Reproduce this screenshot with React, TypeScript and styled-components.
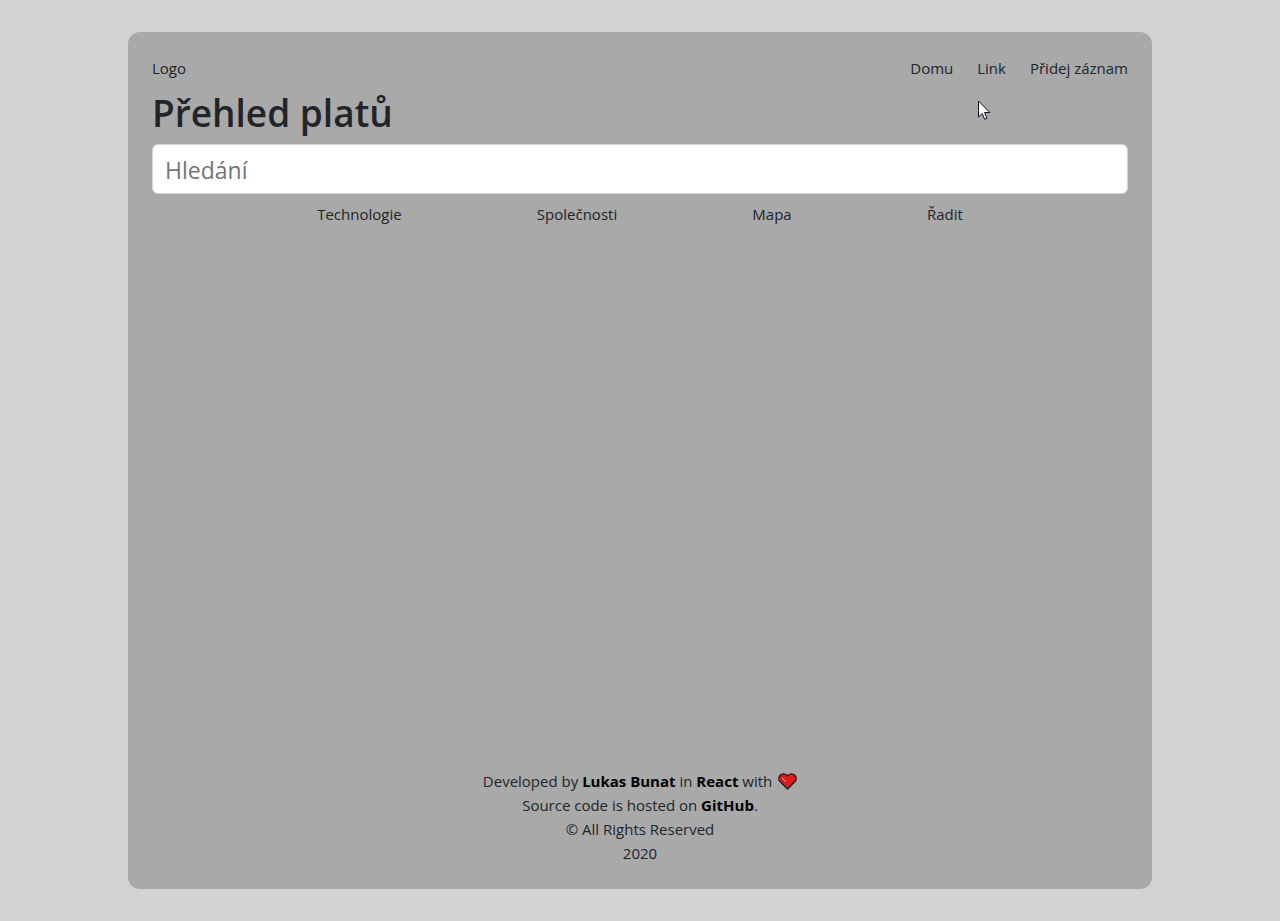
import React from "react";
import styled, { createGlobalStyle } from "styled-components";

const GlobalStyle = createGlobalStyle`
  *, *::before, *::after { box-sizing: border-box; }
  body {
    margin: 0;
    background: #d3d3d3;
    color: #212529;
    font-family: "Segoe UI", "Open Sans", "Noto Sans", sans-serif;
    font-size: 15px;
    font-weight: 400;
    line-height: 24px;
  }
`;

const Page = styled.div`
  display: flex;
  min-height: 100vh;
  padding: 32px 10%;
`;

const Panel = styled.div`
  position: relative;
  flex: 1;
  display: flex;
  flex-direction: column;
  padding: 24px;
  border-radius: 12px;
  background: #a9a9a9;
`;

const Header = styled.header`
  display: flex;
  justify-content: space-between;
  margin-bottom: 8px;
`;

const Nav = styled.nav`
  display: flex;
  gap: 24px;
`;

const PlainLink = styled.a`
  color: inherit;
  text-decoration: none;
`;

const Main = styled.main`
  flex: 1;
  display: flex;
  flex-direction: column;
  gap: 8px;
`;

const Title = styled.h1`
  margin: 0;
  padding-top: 2px;
  font-size: 37px;
  font-weight: 600;
  line-height: 46px;
`;

const SearchInput = styled.input`
  width: 100%;
  height: 50px;
  padding: 8px 12px 6px;
  border: 1px solid #ced4da;
  border-radius: 6px;
  background: #fff;
  color: #495057;
  font-family: inherit;
  font-size: 23px;
  &::placeholder { color: #757575; opacity: 1; }
`;

const Filters = styled.div`
  display: flex;
  justify-content: space-evenly;
  padding: 0 30px;
`;

const FilterButton = styled.button`
  padding: 0;
  border: 0;
  background: none;
  color: inherit;
  font: inherit;
`;

const Footer = styled.footer`
  text-align: center;
`;

const StrongLink = styled(PlainLink)`
  color: #000;
  font-weight: 700;
`;

const HeartIcon = styled.svg`
  width: 19px;
  height: 17px;
  margin-left: 2px;
  vertical-align: -3px;
`;

const Pointer = styled.svg`
  position: absolute;
  top: 68px;
  right: 161px;
  width: 13px;
  height: 21px;
  pointer-events: none;
`;

const filters = ["Technologie", "Společnosti", "Mapa", "Řadit"];

export default function App() {
  return (
    <Page>
      <GlobalStyle />
      <Panel>
        <Header>
          <PlainLink href="#">Logo</PlainLink>
          <Nav>
            <PlainLink href="#">Domu</PlainLink>
            <PlainLink href="#">Link</PlainLink>
            <PlainLink href="#">Přidej záznam</PlainLink>
          </Nav>
        </Header>
        <Main>
          <Title>Přehled platů</Title>
          <SearchInput type="text" placeholder="Hledání" aria-label="Hledání" />
          <Filters>
            {filters.map((name) => (
              <FilterButton type="button" key={name}>{name}</FilterButton>
            ))}
          </Filters>
        </Main>
        <Footer>
          <div>
            Developed by <StrongLink href="#">Lukas Bunat</StrongLink> in{" "}
            <StrongLink href="#">React</StrongLink> with{" "}
            <HeartIcon viewBox="0 0 19 17" role="img" aria-label="love">
              <path
                d="M9.5 16 2 8.600C.5 7 .5 4.300 2 2.500 3.900.300 7.500.300 9.500 3 11.500.300 15.100.300 17 2.500 18.500 4.300 18.500 7 17 8.600Z"
                fill="#e11b1b"
                stroke="#1c1c1c"
                strokeWidth="1.400"
                strokeLinejoin="round"
              />
              <path d="M4 5 7.500 8.500" stroke="#f4b09c" strokeWidth="1" fill="none" />
            </HeartIcon>
          </div>
          <div>
            Source code is hosted on <StrongLink href="#">GitHub</StrongLink>.
          </div>
          <div>© All Rights Reserved</div>
          <div>2020</div>
        </Footer>
        <Pointer viewBox="0 0 13 21" aria-hidden="true">
          <path
            d="M.5 1V17L4.200 13.500 6.700 19.300 9 18.300 6.500 12.500H11.800Z"
            fill="#fff"
            stroke="#10101c"
            strokeWidth="1"
          />
        </Pointer>
      </Panel>
    </Page>
  );
}
